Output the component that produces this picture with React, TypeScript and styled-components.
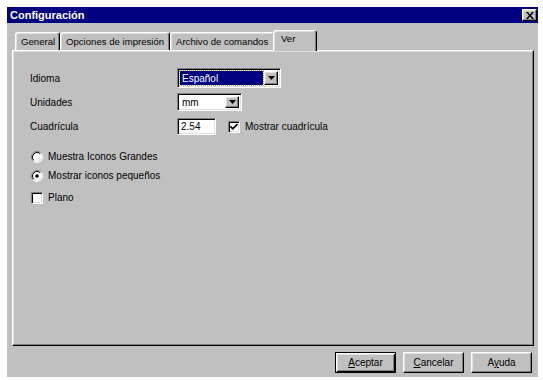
import React from "react";
import styled, { createGlobalStyle, css } from "styled-components";

const GlobalStyle = createGlobalStyle`
  html, body { margin: 0; padding: 0; background: #ffffff; }
  body {
    font-family: "Liberation Sans", Arial, sans-serif;
    font-size: 10px;
    color: #000;
  }
  * { box-sizing: border-box; }
`;

const raised = css`
  border: 1px solid;
  border-color: #ffffff #000000 #000000 #ffffff;
  box-shadow: inset -1px -1px #808080, inset 1px 1px #dfdfdf;
  background: #c0c0c0;
`;

const sunken = css`
  border: 1px solid;
  border-color: #808080 #ffffff #ffffff #808080;
  box-shadow: inset 1px 1px #000000, inset -1px -1px #dfdfdf;
  background: #ffffff;
`;

const Window = styled.div`
  margin: 7px 0 0 7px;
  width: 531px;
  height: 370px;
  background: #c0c0c0;
  display: flex;
  flex-direction: column;
`;

const TitleBar = styled.div`
  height: 16px;
  flex: none;
  background: #000080;
  color: #ffffff;
  display: flex;
  align-items: center;
  justify-content: space-between;
  padding: 0 1px 0 3px;
`;

const Title = styled.span`
  font-weight: bold;
  font-size: 11px;
`;

const CloseButton = styled.div`
  ${raised};
  width: 15px;
  height: 12px;
  display: flex;
  align-items: center;
  justify-content: center;
`;

const Body = styled.div`
  flex: 1;
  display: flex;
  flex-direction: column;
  padding: 7px 4px 4px 5px;
  min-height: 0;
`;

const TabStrip = styled.div`
  height: 20px;
  flex: none;
  display: flex;
  align-items: flex-end;
  padding-left: 3px;
`;

const Tab = styled.div<{ $w: number; $active?: boolean }>`
  width: ${(p) => p.$w}px;
  height: ${(p) => (p.$active ? 21 : 18)}px;
  margin: ${(p) => (p.$active ? "0 -2px -1px -2px" : "0")};
  border: 1px solid;
  border-bottom: none;
  border-color: #ffffff #000000 transparent #ffffff;
  border-radius: 3px 3px 0 0;
  box-shadow: inset -1px 0 #808080, inset 1px 1px #dfdfdf;
  background: #c0c0c0;
  display: flex;
  align-items: ${(p) => (p.$active ? "flex-start" : "center")};
  padding: ${(p) => (p.$active ? "2px 0 0 7px" : "0 0 0 5px")};
  font-size: 9.6px;
  white-space: nowrap;
  position: relative;
  z-index: ${(p) => (p.$active ? 2 : 1)};
`;

const Panel = styled.div`
  height: 296px;
  flex: none;
  border: 1px solid;
  border-color: #ffffff #000000 #000000 #ffffff;
  box-shadow: inset -1px -1px #808080, inset 1px 1px #dfdfdf;
  padding: 17px 16px 0 17px;
  display: flex;
  flex-direction: column;
`;

const FormRow = styled.div<{ $h: number; $mt?: number }>`
  display: flex;
  align-items: center;
  height: ${(p) => p.$h}px;
  margin-top: ${(p) => p.$mt ?? 0}px;
`;

const Label = styled.span`
  width: 147px;
  flex: none;
`;

const Combo = styled.div<{ $w: number; $h: number }>`
  ${sunken};
  width: ${(p) => p.$w}px;
  height: ${(p) => p.$h}px;
  display: flex;
  padding: 2px;
`;

const ComboValue = styled.div<{ $selected?: boolean }>`
  flex: 1;
  display: flex;
  align-items: center;
  padding-left: 2px;
  margin-right: 1px;
  ${(p) =>
    p.$selected &&
    css`
      background: #000080;
      color: #ffffff;
      outline: 1px dotted #b8b060;
    `}
`;

const DropButton = styled.div`
  ${raised};
  width: 14px;
  flex: none;
  display: flex;
  align-items: center;
  justify-content: center;
`;

const TextField = styled.div`
  ${sunken};
  width: 39px;
  height: 17px;
  display: flex;
  align-items: center;
  padding-left: 3px;
`;

const CheckBox = styled.div`
  ${sunken};
  width: 12px;
  height: 12px;
  flex: none;
  display: flex;
  align-items: center;
  justify-content: center;
`;

const CheckGroup = styled.div<{ $ml?: number }>`
  display: flex;
  align-items: center;
  margin-left: ${(p) => p.$ml ?? 0}px;
`;

const ItemText = styled.span`
  margin-left: 5px;
  white-space: nowrap;
`;

const OptionList = styled.div`
  display: flex;
  flex-direction: column;
  margin-top: 12px;
  padding-left: 1px;
`;

const OptionRow = styled.div<{ $mt?: number }>`
  display: flex;
  align-items: center;
  height: 19px;
  margin-top: ${(p) => p.$mt ?? 0}px;
`;

const Spacer = styled.div`
  flex: 1;
`;

const ButtonRow = styled.div`
  display: flex;
  justify-content: flex-end;
  gap: 7px;
  margin-top: 6px;
  padding-right: 2px;
`;

const Button = styled.div<{ $default?: boolean }>`
  ${raised};
  width: 61px;
  height: 21px;
  display: flex;
  align-items: center;
  justify-content: center;
  ${(p) =>
    p.$default &&
    css`
      border: 1px solid #000000;
      box-shadow: inset 1px 1px #ffffff, inset -1px -1px #000000,
        inset 2px 2px #dfdfdf, inset -2px -2px #808080;
    `}
`;

const Arrow = () => (
  <svg width="7" height="4" viewBox="0 0 7 4">
    <path d="M0 0h7L3.5 4z" fill="#000" />
  </svg>
);

const CloseX = () => (
  <svg width="8" height="7" viewBox="0 0 8 7">
    <path d="M0 0h2l2 2.5L6 0h2L5 3.5 8 7H6L4 4.5 2 7H0l3-3.5z" fill="#000" />
  </svg>
);

const Check = () => (
  <svg width="8" height="8" viewBox="0 0 8 8">
    <path d="M0.5 3.5l2.3 2.3L7.5 1.1" fill="none" stroke="#000" strokeWidth="1.8" />
  </svg>
);

const Radio = ({ checked }: { checked?: boolean }) => (
  <svg width="12" height="12" viewBox="0 0 12 12">
    <circle cx="6" cy="6" r="5" fill="#ffffff" />
    <path d="M2.11 9.89A5.5 5.5 0 0 1 9.89 2.11" fill="none" stroke="#808080" />
    <path d="M9.89 2.11A5.5 5.5 0 0 1 2.11 9.89" fill="none" stroke="#ffffff" />
    <path d="M2.82 9.18A4.5 4.5 0 0 1 9.18 2.82" fill="none" stroke="#000000" />
    <path d="M9.18 2.82A4.5 4.5 0 0 1 2.82 9.18" fill="none" stroke="#dfdfdf" />
    {checked && <circle cx="6" cy="6" r="1.8" fill="#000" />}
  </svg>
);

export default function App() {
  return (
    <>
      <GlobalStyle />
      <Window>
        <TitleBar>
          <Title>Configuración</Title>
          <CloseButton>
            <CloseX />
          </CloseButton>
        </TitleBar>
        <Body>
          <TabStrip>
            <Tab $w={45}>General</Tab>
            <Tab $w={110}>Opciones de impresión</Tab>
            <Tab $w={105}>Archivo de comandos</Tab>
            <Tab $w={44} $active>
              Ver
            </Tab>
          </TabStrip>
          <Panel>
            <FormRow $h={20}>
              <Label>Idioma</Label>
              <Combo $w={104} $h={20}>
                <ComboValue $selected>Español</ComboValue>
                <DropButton>
                  <Arrow />
                </DropButton>
              </Combo>
            </FormRow>
            <FormRow $h={18} $mt={5}>
              <Label>Unidades</Label>
              <Combo $w={65} $h={18}>
                <ComboValue>mm</ComboValue>
                <DropButton>
                  <Arrow />
                </DropButton>
              </Combo>
            </FormRow>
            <FormRow $h={17} $mt={7}>
              <Label>Cuadrícula</Label>
              <TextField>2.54</TextField>
              <CheckGroup $ml={12}>
                <CheckBox>
                  <Check />
                </CheckBox>
                <ItemText>Mostrar cuadrícula</ItemText>
              </CheckGroup>
            </FormRow>
            <OptionList>
              <OptionRow>
                <Radio />
                <ItemText>Muestra Iconos Grandes</ItemText>
              </OptionRow>
              <OptionRow>
                <Radio checked />
                <ItemText>Mostrar iconos pequeños</ItemText>
              </OptionRow>
              <OptionRow $mt={3}>
                <CheckBox />
                <ItemText>Plano</ItemText>
              </OptionRow>
            </OptionList>
            <Spacer />
          </Panel>
          <ButtonRow>
            <Button $default>
              <span>
                <u>A</u>ceptar
              </span>
            </Button>
            <Button>
              <span>
                <u>C</u>ancelar
              </span>
            </Button>
            <Button>
              <span>
                A<u>y</u>uda
              </span>
            </Button>
          </ButtonRow>
        </Body>
      </Window>
    </>
  );
}
